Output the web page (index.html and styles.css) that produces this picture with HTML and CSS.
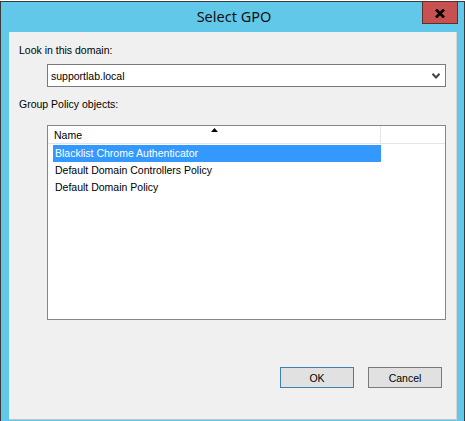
FILE: index.html
```html
<!DOCTYPE html>
<html>
<head>
<meta charset="utf-8">
<link rel="stylesheet" href="styles.css">
</head>
<body>
<div class="window">
  <div class="titlebar">
    <span class="title">Select GPO</span>
    <div class="close">
      <svg width="10" height="9" viewBox="0 0 10 9"><path d="M1 0.5 L9 8.5 M9 0.5 L1 8.5" stroke="#000" stroke-width="2.6" fill="none"/></svg>
    </div>
  </div>
  <div class="client">
    <div class="label">Look in this domain:</div>
    <div class="combo">
      <span class="combo-text">supportlab.local</span>
      <svg class="chev" width="8" height="6" viewBox="0 0 8 6"><path d="M0.5 0.8 L4 4.5 L7.5 0.8" stroke="#444" stroke-width="2" fill="none"/></svg>
    </div>
    <div class="label label2">Group Policy objects:</div>
    <div class="listbox">
      <div class="header">
        <div class="col">
          <span>Name</span>
          <svg class="sort" width="7" height="4" viewBox="0 0 7 4"><path d="M3.5 0 L7 4 L0 4 Z" fill="#000"/></svg>
        </div>
      </div>
      <div class="rows">
        <div class="row selected">Blacklist Chrome Authenticator</div>
        <div class="row">Default Domain Controllers Policy</div>
        <div class="row">Default Domain Policy</div>
      </div>
    </div>
    <div class="buttons">
      <div class="btn default">OK</div>
      <div class="btn">Cancel</div>
    </div>
  </div>
</div>
</body>
</html>
```
FILE: styles.css
```css
html, body {
  margin: 0;
  padding: 0;
  background: #ffffff;
}
body {
  width: 465px;
  height: 421px;
  overflow: hidden;
  font-family: "Liberation Sans", Arial, sans-serif;
  font-size: 10.5px;
  color: #000;
}
.window {
  position: relative;
  margin-top: 1px;
  width: 448px;
  height: 418px;
  border: 1px solid #3a3a3a;
  background: #62c8ea;
  display: flex;
  flex-direction: column;
  padding: 0 7px 8px 8px;
  box-sizing: content-box;
}
.titlebar {
  height: 30px;
  display: flex;
  align-items: center;
  justify-content: center;
  flex: none;
}
.title {
  font-family: "Noto Sans", "Open Sans", sans-serif;
  font-size: 14.5px;
  color: #111;
  margin-top: -3px;
  margin-left: 2px;
}
.close {
  position: absolute;
  left: 421px;
  top: -1px;
  width: 34px;
  height: 21px;
  background: #c75050;
  border: 1px solid #5a3030;
  display: flex;
  align-items: center;
  justify-content: center;
}
.close svg {
  margin-top: 1px;
}
.client {
  flex: 1;
  background: #f0f0f0;
  border-right: 1px solid #d6d6d6;
  border-bottom: 1px solid #c4c4c4;
  display: flex;
  flex-direction: column;
  padding-left: 10px;
  padding-top: 11px;
}
.label {
  height: 14px;
  line-height: 14px;
}
.combo {
  margin-left: 28px;
  margin-top: 7px;
  width: 399px;
  height: 23px;
  border: 1px solid #7a7a7a;
  background: #fff;
  display: flex;
  align-items: center;
  justify-content: space-between;
  padding: 0 5px 0 3px;
  box-sizing: border-box;
}
.label2 {
  margin-top: 10px;
}
.listbox {
  margin-left: 28px;
  margin-top: 14px;
  width: 399px;
  height: 195px;
  box-sizing: border-box;
  border: 1px solid #828790;
  background: #fff;
  flex: none;
}
.header {
  height: 17px;
  border-bottom: 1px solid #e5e5e5;
  display: flex;
  background: #fff;
}
.col {
  position: relative;
  width: 333px;
  border-right: 1px solid #e5e5e5;
  padding-left: 6px;
  line-height: 18px;
  box-sizing: border-box;
}
.sort {
  position: absolute;
  left: 163px;
  top: 2px;
}
.rows {
  padding-top: 1px;
  padding-left: 5px;
}
.row {
  width: 328px;
  height: 17px;
  line-height: 17px;
  padding-left: 2px;
  box-sizing: border-box;
}
.row.selected {
  background: #3399ff;
  color: #fff;
}
.buttons {
  margin-top: 47px;
  display: flex;
  justify-content: flex-end;
  gap: 14px;
  padding-right: 14px;
}
.btn {
  width: 74px;
  height: 21px;
  box-sizing: border-box;
  background: #e1e1e1;
  border: 1px solid #7a7a7a;
  display: flex;
  align-items: center;
  justify-content: center;
}
.btn.default {
  border-color: #3c7fb1;
}
```
